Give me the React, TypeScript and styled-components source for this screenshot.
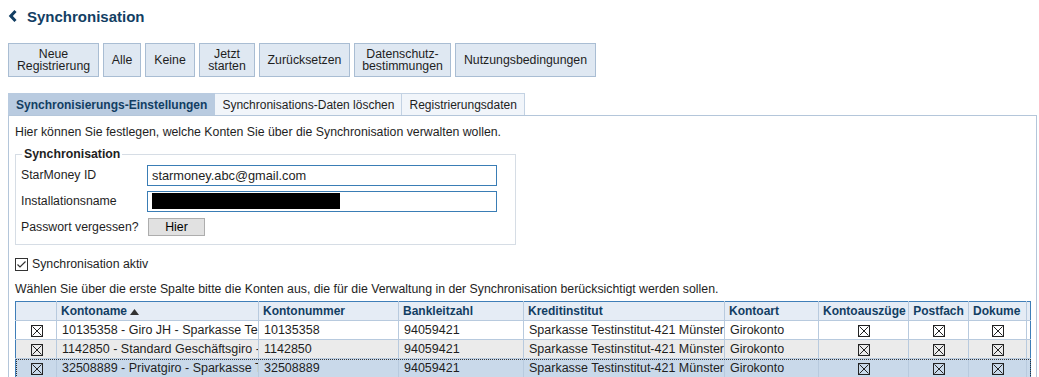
import React from "react";
import styled, { createGlobalStyle } from "styled-components";

const Global = createGlobalStyle`
  html, body { margin: 0; padding: 0; background: #ffffff; }
  body { font-family: "Liberation Sans", Arial, sans-serif; font-size: 12.3px; color: #1e1e1e; }
  * { box-sizing: border-box; }
`;

const Page = styled.div`
  padding: 7px 2px 0 8px;
  width: 1039px;
  height: 377px;
  overflow: hidden;
`;

const TitleRow = styled.div`
  display: flex;
  align-items: center;
  gap: 9px;
  height: 18px;
  color: #123e63;
`;

const Title = styled.h1`
  margin: 0;
  font-size: 15px;
  font-weight: bold;
  color: #123e63;
`;

const Toolbar = styled.div`
  display: flex;
  gap: 4px;
  margin-top: 18px;
`;

const ToolButton = styled.button<{ $w: number }>`
  width: ${(p) => p.$w}px;
  height: 34px;
  background: #dfe8f2;
  border: 1px solid #a9bdd3;
  font-family: "Liberation Sans", Arial, sans-serif;
  font-size: 12.3px;
  line-height: 12px;
  color: #1e1e1e;
  padding: 0 3px;
  text-align: center;
`;

const Tabs = styled.div`
  display: flex;
  margin-top: 16px;
`;

const Tab = styled.div<{ $active?: boolean }>`
  height: 22px;
  display: flex;
  align-items: center;
  padding: 0 ${(p) => (p.$active ? 7 : 7)}px;
  font-size: 12px;
  font-weight: ${(p) => (p.$active ? "bold" : "normal")};
  color: ${(p) => (p.$active ? "#123e63" : "#1e1e1e")};
  background: ${(p) => (p.$active ? "#b9cbe0" : "#f1f5fa")};
  border: 1px solid ${(p) => (p.$active ? "#b9cbe0" : "#c3d2e3")};
  border-bottom: none;
  white-space: nowrap;
  & + & { border-left: none; }
`;

const Panel = styled.div`
  border: 1px solid #b4c6da;
  padding: 8px 6px 0 6px;
  height: 270px;
`;

const Intro = styled.div`
  height: 16px;
  line-height: 16px;
`;

const Fieldset = styled.fieldset`
  margin: 7px 0 0 0;
  width: 501px;
  border: 1px solid #d6dde5;
  padding: 1px 18px 4px 5px;
`;

const Legend = styled.legend`
  font-weight: bold;
  padding: 0 2px;
  margin-left: 1px;
`;

const FormRow = styled.div`
  display: grid;
  grid-template-columns: 126px 1fr;
  align-items: center;
  height: 26px;
`;

const TextBox = styled.div`
  height: 21px;
  border: 1px solid #3a7db5;
  padding: 0 4px;
  display: flex;
  align-items: center;
  font-size: 12.8px;
`;

const Redacted = styled.div`
  width: 188px;
  height: 16px;
  background: #000;
`;

const SmallButton = styled.button`
  width: 57px;
  height: 18px;
  background: #e1e1e1;
  border: 1px solid #adadad;
  font-family: "Liberation Sans", Arial, sans-serif;
  font-size: 12.3px;
  padding: 0;
  margin-left: 1px;
`;

const CheckLine = styled.label`
  display: flex;
  align-items: center;
  gap: 4px;
  margin-top: 12px;
  height: 14px;
`;

const Note = styled.div`
  margin-top: 10px;
  height: 16px;
  line-height: 16px;
`;

const Table = styled.table`
  margin-top: 4px;
  border-collapse: collapse;
  table-layout: fixed;
  width: 1015px;
  border-top: 1px solid #3f7eb8;
  border-left: 1px solid #3f7eb8;
  border-right: 1px solid #3f7eb8;
`;

const Th = styled.th<{ $align?: string }>`
  height: 19px;
  background: #e5ecf5;
  color: #123e63;
  font-size: 12px;
  font-weight: bold;
  text-align: ${(p) => p.$align || "left"};
  padding: 0 4px;
  border-right: 1px solid #b8cade;
  border-bottom: 1px solid #b8cade;
  white-space: nowrap;
  overflow: hidden;
  text-overflow: clip;
`;

const FillerTh = styled.th`
  background: #e5ecf5;
  border-bottom: 1px solid #b8cade;
  padding: 0;
`;

const Tr = styled.tr<{ $bg: string; $selected?: boolean }>`
  background: ${(p) => p.$bg};
  outline: ${(p) => (p.$selected ? "1px dotted #333" : "none")};
  outline-offset: -1px;
`;

const Td = styled.td<{ $center?: boolean }>`
  height: 19px;
  padding: 0 4px 0 5px;
  text-align: ${(p) => (p.$center ? "center" : "left")};
  border-right: 1px solid #b8cade;
  border-bottom: 1px solid #b8cade;
  white-space: nowrap;
  overflow: hidden;
  text-overflow: clip;
  font-size: 12.5px;
`;

const FillerTd = styled.td`
  padding: 0;
  border-bottom: 1px solid #b8cade;
`;

const Chevron = () => (
  <svg width="10" height="14" viewBox="0 0 10 14">
    <polyline points="7.5,2 2.8,7 7.5,12" fill="none" stroke="#123e63" strokeWidth="3" />
  </svg>
);

const XBox = () => (
  <svg width="12" height="12" viewBox="0 0 12 12" style={{ verticalAlign: "middle" }}>
    <rect x="0.5" y="0.5" width="11" height="11" fill="none" stroke="#222" />
    <line x1="1.5" y1="1.5" x2="10.5" y2="10.5" stroke="#222" />
    <line x1="10.5" y1="1.5" x2="1.5" y2="10.5" stroke="#222" />
  </svg>
);

const CheckBox = () => (
  <svg width="13" height="13" viewBox="0 0 13 13">
    <rect x="0.5" y="0.5" width="12" height="12" fill="#fff" stroke="#333" />
    <polyline points="2.5,6.5 5,9 10.5,3.5" fill="none" stroke="#333" strokeWidth="1.2" />
  </svg>
);

const SortArrow = () => (
  <svg width="9" height="6" viewBox="0 0 9 6" style={{ marginLeft: 3 }}>
    <polygon points="0,6 4.5,0 9,6" fill="#333" />
  </svg>
);

const buttons: [string[], number][] = [
  [["Neue", "Registrierung"], 91],
  [["Alle"], 38],
  [["Keine"], 50],
  [["Jetzt", "starten"], 56],
  [["Zurücksetzen"], 91],
  [["Datenschutz-", "bestimmungen"], 97],
  [["Nutzungsbedingungen"], 141],
];

const rows = [
  { name: "10135358 - Giro JH - Sparkasse Te", nr: "10135358", bg: "#ffffff" },
  { name: "1142850 - Standard Geschäftsgiro -", nr: "1142850", bg: "#ebebeb" },
  { name: "32508889 - Privatgiro - Sparkasse T", nr: "32508889", bg: "#c9d9ea", sel: true },
];

const cols = [41, 202, 140, 125, 201, 94, 90, 60, 58, 4];

export default function App() {
  return (
    <Page>
      <Global />
      <TitleRow>
        <Chevron />
        <Title>Synchronisation</Title>
      </TitleRow>
      <Toolbar>
        {buttons.map(([lines, w], i) => (
          <ToolButton key={i} $w={w}>
            {lines.map((l, j) => (
              <React.Fragment key={j}>
                {j > 0 && <br />}
                {l}
              </React.Fragment>
            ))}
          </ToolButton>
        ))}
      </Toolbar>
      <Tabs>
        <Tab $active>Synchronisierungs-Einstellungen</Tab>
        <Tab>Synchronisations-Daten löschen</Tab>
        <Tab>Registrierungsdaten</Tab>
      </Tabs>
      <Panel>
        <Intro>Hier können Sie festlegen, welche Konten Sie über die Synchronisation verwalten wollen.</Intro>
        <Fieldset>
          <Legend>Synchronisation</Legend>
          <FormRow>
            <span>StarMoney ID</span>
            <TextBox>starmoney.abc@gmail.com</TextBox>
          </FormRow>
          <FormRow>
            <span>Installationsname</span>
            <TextBox>
              <Redacted />
            </TextBox>
          </FormRow>
          <FormRow>
            <span>Passwort vergessen?</span>
            <div>
              <SmallButton>Hier</SmallButton>
            </div>
          </FormRow>
        </Fieldset>
        <CheckLine>
          <CheckBox />
          Synchronisation aktiv
        </CheckLine>
        <Note>
          Wählen Sie über die erste Spalte bitte die Konten aus, die für die Verwaltung in der Synchronisation
          berücksichtigt werden sollen.
        </Note>
        <Table>
          <colgroup>
            {cols.map((w, i) => (
              <col key={i} style={{ width: w }} />
            ))}
          </colgroup>
          <thead>
            <tr>
              <Th />
              <Th>
                Kontoname
                <SortArrow />
              </Th>
              <Th>Kontonummer</Th>
              <Th>Bankleitzahl</Th>
              <Th>Kreditinstitut</Th>
              <Th>Kontoart</Th>
              <Th $align="center">Kontoauszüge</Th>
              <Th $align="center">Postfach</Th>
              <Th>Dokume</Th>
              <FillerTh />
            </tr>
          </thead>
          <tbody>
            {rows.map((r, i) => (
              <Tr key={i} $bg={r.bg} $selected={r.sel}>
                <Td $center>
                  <XBox />
                </Td>
                <Td>{r.name}</Td>
                <Td>{r.nr}</Td>
                <Td>94059421</Td>
                <Td>Sparkasse Testinstitut-421 Münster</Td>
                <Td>Girokonto</Td>
                <Td $center>
                  <XBox />
                </Td>
                <Td $center>
                  <XBox />
                </Td>
                <Td $center>
                  <XBox />
                </Td>
                <FillerTd />
              </Tr>
            ))}
          </tbody>
        </Table>
      </Panel>
    </Page>
  );
}
